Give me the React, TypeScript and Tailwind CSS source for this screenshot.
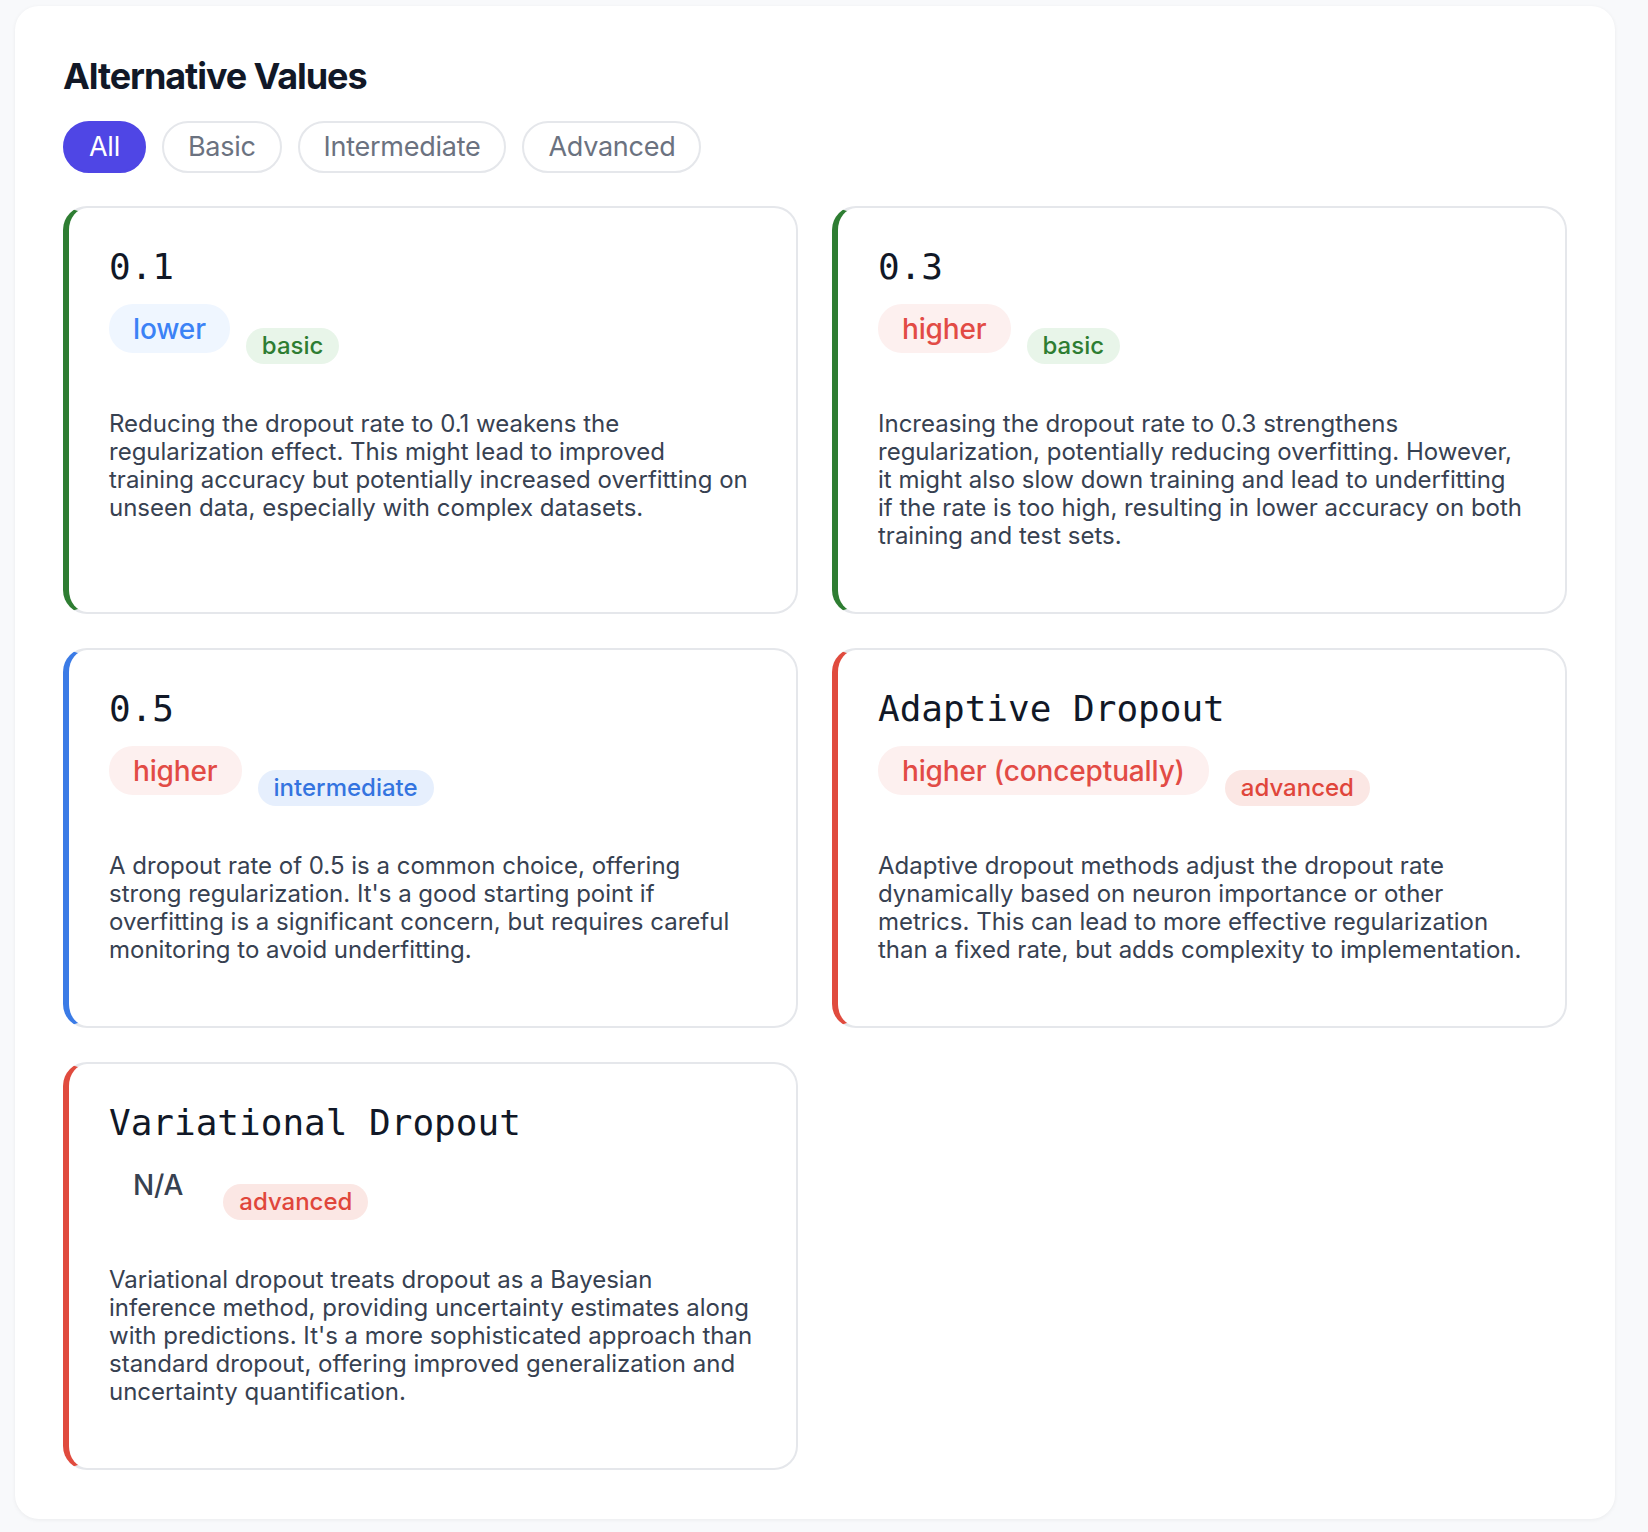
import React from "react";

type Card = {
  title: string;
  impact: string;
  impactKind: "lower" | "higher" | "na";
  level: "basic" | "intermediate" | "advanced";
  text: string;
};

const cards: Card[] = [
  {
    title: "0.1",
    impact: "lower",
    impactKind: "lower",
    level: "basic",
    text: "Reducing the dropout rate to 0.1 weakens the regularization effect. This might lead to improved training accuracy but potentially increased overfitting on unseen data, especially with complex datasets.",
  },
  {
    title: "0.3",
    impact: "higher",
    impactKind: "higher",
    level: "basic",
    text: "Increasing the dropout rate to 0.3 strengthens regularization, potentially reducing overfitting. However, it might also slow down training and lead to underfitting if the rate is too high, resulting in lower accuracy on both training and test sets.",
  },
  {
    title: "0.5",
    impact: "higher",
    impactKind: "higher",
    level: "intermediate",
    text: "A dropout rate of 0.5 is a common choice, offering strong regularization. It's a good starting point if overfitting is a significant concern, but requires careful monitoring to avoid underfitting.",
  },
  {
    title: "Adaptive Dropout",
    impact: "higher (conceptually)",
    impactKind: "higher",
    level: "advanced",
    text: "Adaptive dropout methods adjust the dropout rate dynamically based on neuron importance or other metrics. This can lead to more effective regularization than a fixed rate, but adds complexity to implementation.",
  },
  {
    title: "Variational Dropout",
    impact: "N/A",
    impactKind: "na",
    level: "advanced",
    text: "Variational dropout treats dropout as a Bayesian inference method, providing uncertainty estimates along with predictions. It's a more sophisticated approach than standard dropout, offering improved generalization and uncertainty quantification.",
  },
];

const borderByLevel: Record<Card["level"], string> = {
  basic: "border-l-[#2e7d32]",
  intermediate: "border-l-[#3b7be6]",
  advanced: "border-l-[#e04b3e]",
};

const levelBadge: Record<Card["level"], string> = {
  basic: "bg-[#e8f5e9] text-[#2e7d32]",
  intermediate: "bg-[#e6effd] text-[#3474e0]",
  advanced: "bg-[#fbe7e4] text-[#e0463b]",
};

const impactBadge: Record<Card["impactKind"], string> = {
  lower: "bg-[#eff6ff] text-[#3b82f6]",
  higher: "bg-[#fdf0ef] text-[#e24b45]",
  na: "bg-transparent text-[#374151]",
};

function AltCard({ c }: { c: Card }) {
  return (
    <div
      className={`rounded-[24px] border-2 border-[#e5e7eb] border-l-[6px] ${borderByLevel[c.level]} bg-white pl-[40px] pr-[42px] pt-[38px] pb-[62px]`}
    >
      <h3 className="mt-[1px] font-['DejaVu_Sans_Mono',monospace] text-[36px] leading-[40px] font-normal text-[#111827]">
        {c.title}
      </h3>
      <div className="mt-[17px] flex items-start gap-[16px]">
        <span
          className={`flex h-[49px] items-center rounded-[24px] px-[24px] text-[28px] font-medium tracking-[-0.005em] ${impactBadge[c.impactKind]}`}
        >
          {c.impact}
        </span>
        <span
          className={`mt-[24px] flex h-[36px] items-center rounded-[18px] px-[16px] text-[24px] font-medium ${levelBadge[c.level]}`}
        >
          {c.level}
        </span>
      </div>
      <p className="mt-[46px] text-[24px] leading-[28px] text-[#374151]">{c.text}</p>
    </div>
  );
}

export default function App() {
  const filters = ["All", "Basic", "Intermediate", "Advanced"];
  return (
    <div className="min-h-[1532px] bg-[#f8f9fb] pt-[6px] pb-[13px] font-['Inter','Noto_Sans',sans-serif]">
      <div className="ml-[15px] w-[1600px] rounded-[24px] bg-white px-[48px] pt-[50px] pb-[49px] shadow-[0_1px_4px_rgba(0,0,0,0.06)]">
        <h2 className="text-[36px] leading-[40px] font-bold tracking-[-0.03em] text-[#111827]">
          Alternative Values
        </h2>
        <div className="mt-[25px] flex gap-[16px]">
          {filters.map((f, i) => (
            <button
              key={f}
              className={
                i === 0
                  ? "flex h-[52px] items-center rounded-full border-2 border-[#4f46e5] bg-[#4f46e5] px-[24px] text-[27px] tracking-[-0.01em] text-white"
                  : "flex h-[52px] items-center rounded-full border-2 border-[#e5e7eb] bg-white px-[24px] text-[27px] tracking-[-0.01em] text-[#6b7280]"
              }
            >
              {f}
            </button>
          ))}
        </div>
        <div className="mt-[33px] grid grid-cols-2 gap-[34px]">
          {cards.map((c) => (
            <AltCard key={c.title} c={c} />
          ))}
        </div>
      </div>
    </div>
  );
}
